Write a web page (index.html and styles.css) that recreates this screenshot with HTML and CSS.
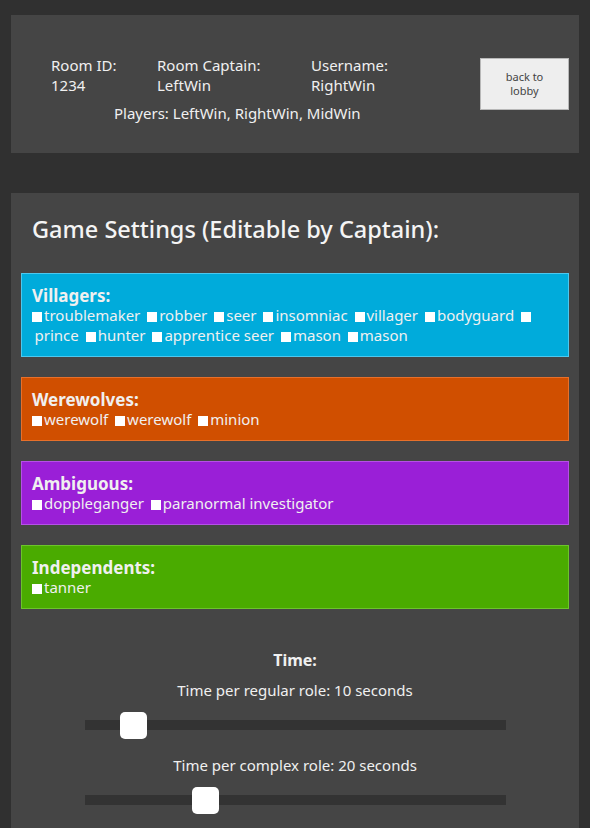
FILE: index.html
```html
<!DOCTYPE html>
<html>
<head>
<meta charset="utf-8">
<link rel="stylesheet" href="styles.css">
</head>
<body>
<header class="panel room">
  <div class="info">
    <div class="field f1">Room ID:<br>1234</div>
    <div class="field f2">Room Captain:<br>LeftWin</div>
    <div class="field f3">Username:<br>RightWin</div>
    <div class="players">Players: LeftWin, RightWin, MidWin</div>
  </div>
  <button class="back">back to<br>lobby</button>
</header>

<main class="panel settings">
  <h1 class="title">Game Settings (Editable by Captain):</h1>

  <section class="team villagers">
    <h2>Villagers:</h2>
    <p class="roles"><span class="chk"></span>troublemaker <span class="chk"></span>robber <span class="chk"></span>seer <span class="chk"></span>insomniac <span class="chk"></span>villager <span class="chk"></span>bodyguard <span class="chk"></span><br>&thinsp;prince <span class="chk"></span>hunter <span class="chk"></span>apprentice seer <span class="chk"></span>mason <span class="chk"></span>mason</p>
  </section>

  <section class="team werewolves">
    <h2>Werewolves:</h2>
    <p class="roles"><span class="chk"></span>werewolf <span class="chk"></span>werewolf <span class="chk"></span>minion</p>
  </section>

  <section class="team ambiguous">
    <h2>Ambiguous:</h2>
    <p class="roles"><span class="chk"></span>doppleganger <span class="chk"></span>paranormal investigator</p>
  </section>

  <section class="team independents">
    <h2>Independents:</h2>
    <p class="roles"><span class="chk"></span>tanner</p>
  </section>

  <section class="time">
    <h3>Time:</h3>
    <div class="label">Time per regular role: 10 seconds</div>
    <input class="slider" type="range" min="5" max="60" value="10">
    <div class="label">Time per complex role: 20 seconds</div>
    <input class="slider" type="range" min="5" max="60" value="20">
  </section>
</main>
</body>
</html>
```

FILE: styles.css
```css
* { box-sizing: border-box; }
html, body { margin: 0; }
body {
  background: #303030;
  padding: 15px 11px 0;
  font-family: "Noto Sans", "Open Sans", sans-serif;
  color: #f0f0f0;
  font-size: 15px;
  line-height: 20px;
}
.panel { background: #454545; }
.room {
  height: 138px;
  display: flex;
  justify-content: space-between;
  align-items: flex-start;
  padding: 40px 10px 0 40px;
  margin-bottom: 40px;
}
.info {
  display: grid;
  grid-template-columns: 106px 154px auto;
}
.players {
  grid-column: 1 / 4;
  margin: 8px 0 0 63px;
}
.back {
  margin-top: 3px;
  width: 89px;
  height: 52px;
  background: #eeeeee;
  border: 1px solid #b8b8b8;
  font-family: inherit;
  font-size: 11px;
  line-height: 14px;
  color: #444;
  padding: 0;
}
.settings {
  padding: 21px 10px 20px;
  min-height: 700px;
}
.title {
  margin: 0 0 29px 11px;
  font-size: 23.5px;
  line-height: 30px;
  font-weight: 500;
  color: #f4f4f4;
}
.team {
  border: 1px solid;
  padding: 12px 10px 10.5px;
  margin-bottom: 20px;
}
.team h2 {
  margin: 0;
  font-size: 17px;
  line-height: 20px;
  font-weight: 700;
}
.roles {
  margin: 0;
  line-height: 19.5px;
}
.chk {
  display: inline-block;
  width: 10px;
  height: 10px;
  background: #fff;
  margin: 0 2px 0 3px;
  vertical-align: -1px;
}
.chk:first-child { margin-left: 0; }
.villagers { background: #00abdb; border-color: #4cc8ef; }
.werewolves { background: #d04f00; border-color: #e8702a; }
.ambiguous { background: #9a1fd7; border-color: #b551e6; }
.independents { background: #4aab00; border-color: #6cc52a; }

.time {
  display: flex;
  flex-direction: column;
  align-items: center;
  padding-top: 21px;
}
.time h3 {
  margin: 0 0 10px;
  font-size: 16px;
  line-height: 20px;
  font-weight: 700;
}
.label { line-height: 20px; }
.slider {
  -webkit-appearance: none;
  appearance: none;
  width: 421px;
  height: 27px;
  margin: 12px 0 16px;
  background: transparent;
  padding: 0;
}
.slider::-webkit-slider-runnable-track {
  height: 10px;
  background: #333333;
}
.slider::-webkit-slider-thumb {
  -webkit-appearance: none;
  width: 27px;
  height: 27px;
  margin-top: -8.5px;
  background: #ffffff;
  border-radius: 5px;
}
```
